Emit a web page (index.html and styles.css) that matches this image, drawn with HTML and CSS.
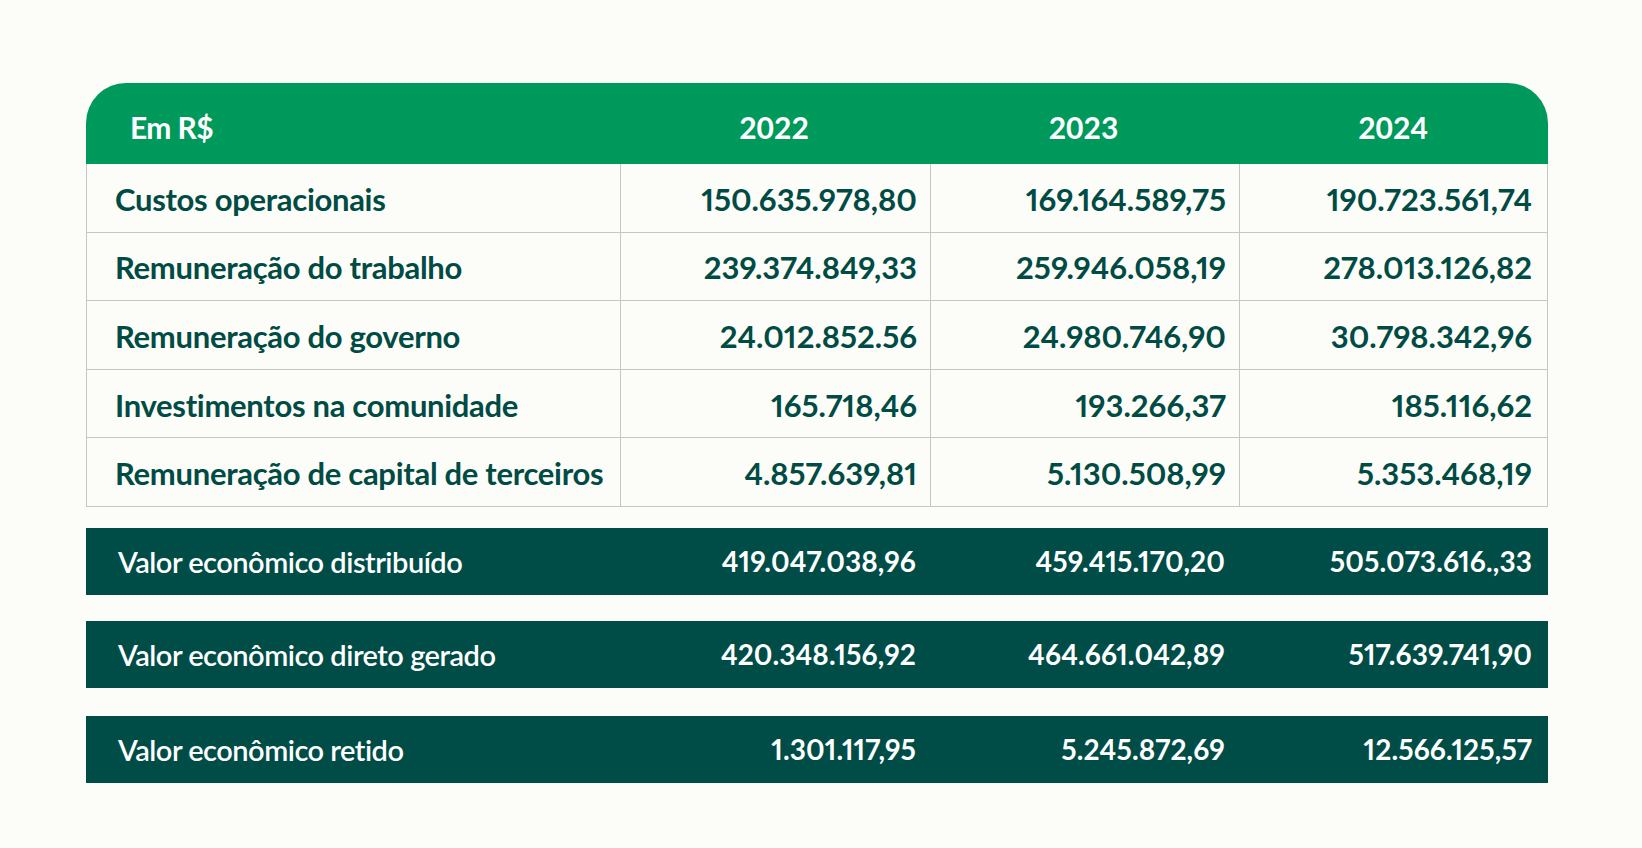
FILE: index.html
```html
<!DOCTYPE html>
<html lang="pt-BR">
<head>
<meta charset="utf-8">
<title>Valor econômico</title>
<link rel="stylesheet" href="styles.css">
</head>
<body>
<div class="table">
  <div class="head">
    <div class="hcell first">Em R$</div>
    <div class="hcell">2022</div>
    <div class="hcell">2023</div>
    <div class="hcell">2024</div>
  </div>
  <div class="body">
    <div class="row">
      <div class="cell label">Custos operacionais</div>
      <div class="cell num">150.635.978,80</div>
      <div class="cell num">169.164.589,75</div>
      <div class="cell num">190.723.561,74</div>
    </div>
    <div class="row">
      <div class="cell label">Remuneração do trabalho</div>
      <div class="cell num">239.374.849,33</div>
      <div class="cell num">259.946.058,19</div>
      <div class="cell num">278.013.126,82</div>
    </div>
    <div class="row">
      <div class="cell label">Remuneração do governo</div>
      <div class="cell num">24.012.852.56</div>
      <div class="cell num">24.980.746,90</div>
      <div class="cell num">30.798.342,96</div>
    </div>
    <div class="row">
      <div class="cell label">Investimentos na comunidade</div>
      <div class="cell num">165.718,46</div>
      <div class="cell num">193.266,37</div>
      <div class="cell num">185.116,62</div>
    </div>
    <div class="row">
      <div class="cell label">Remuneração de capital de terceiros</div>
      <div class="cell num">4.857.639,81</div>
      <div class="cell num">5.130.508,99</div>
      <div class="cell num">5.353.468,19</div>
    </div>
  </div>
  <div class="bar bar1">
    <div class="blabel">Valor econômico distribuído</div>
    <div class="bnum">419.047.038,96</div>
    <div class="bnum">459.415.170,20</div>
    <div class="bnum">505.073.616.,33</div>
  </div>
  <div class="bar bar2">
    <div class="blabel">Valor econômico direto gerado</div>
    <div class="bnum">420.348.156,92</div>
    <div class="bnum">464.661.042,89</div>
    <div class="bnum">517.639.741,90</div>
  </div>
  <div class="bar bar3">
    <div class="blabel">Valor econômico retido</div>
    <div class="bnum">1.301.117,95</div>
    <div class="bnum">5.245.872,69</div>
    <div class="bnum">12.566.125,57</div>
  </div>
</div>
</body>
</html>
```

FILE: styles.css
```css
html, body {
  margin: 0;
  padding: 0;
  background: #fcfcf8;
}
body {
  padding: 83px 0 0 86px;
  font-family: Lato, "Open Sans", sans-serif;
}
.table {
  width: 1462px;
}
.head,
.row,
.bar {
  display: grid;
  grid-template-columns: 533px 310px 309px 310px;
}
.head {
  height: 81px;
  background: #00995c;
  border-radius: 40px 40px 0 0;
  color: #ffffff;
  font-weight: 700;
  font-size: 30px;
}
.hcell {
  display: flex;
  align-items: center;
  justify-content: center;
  padding-top: 6px;
}
.hcell.first {
  justify-content: flex-start;
  padding-left: 44px;
  letter-spacing: -0.6px;
}
.body {
  border-left: 1px solid #c6c6c6;
  border-right: 1px solid #c6c6c6;
}
.row {
  height: 68.6px;
  box-sizing: border-box;
  border-bottom: 1px solid #c6c6c6;
  color: #004b44;
  font-weight: 700;
  font-size: 31px;
}
.cell {
  display: flex;
  align-items: center;
  padding-top: 2px;
}
.cell + .cell {
  border-left: 1px solid #c6c6c6;
}
.cell.label {
  padding-left: 28px;
  letter-spacing: -0.3px;
}
.cell.num {
  justify-content: flex-end;
  padding-right: 13px;
  letter-spacing: 0;
  font-variant-numeric: proportional-nums;
}
.cell.num:last-child {
  padding-right: 17px;
}
.bar {
  height: 67px;
  background: #004d47;
  color: #ffffff;
  font-size: 28px;
  font-weight: 700;
}
.bar1 { margin-top: 21px; }
.bar2 { margin-top: 26px; }
.bar3 { margin-top: 28px; }
.blabel {
  display: flex;
  align-items: center;
  padding-left: 32px;
  font-weight: 600;
  font-size: 29px;
  letter-spacing: -0.5px;
}
.bnum {
  display: flex;
  align-items: center;
  justify-content: flex-end;
  padding-right: 13px;
  letter-spacing: 0.1px;
  font-variant-numeric: proportional-nums;
}
.bnum:last-child {
  padding-right: 16px;
}
```
